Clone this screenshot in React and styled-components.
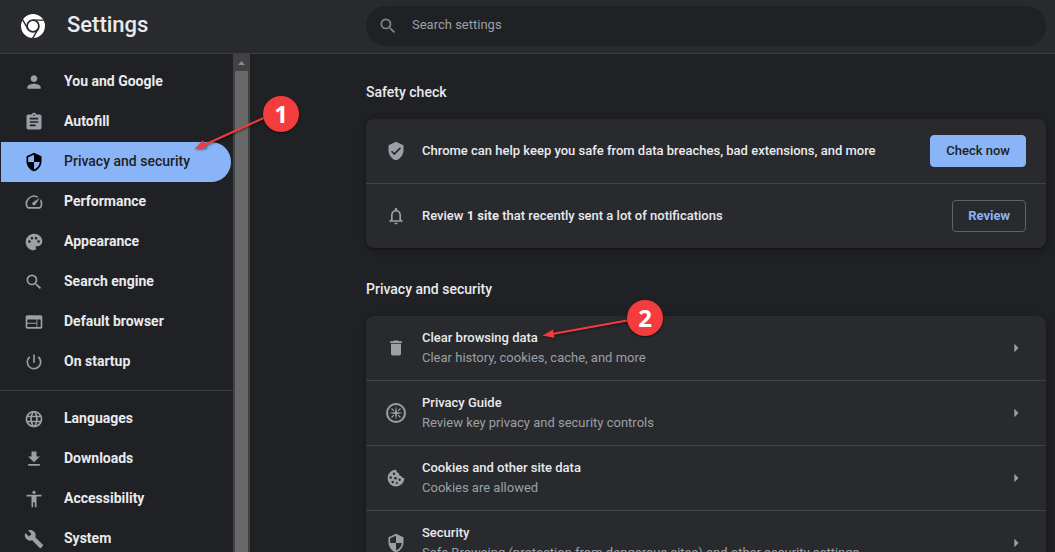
import React, { useState } from 'react';
import styled, { createGlobalStyle, css } from 'styled-components';
import {
  MdPerson,
  MdAssignment,
  MdSecurity,
  MdPalette,
  MdSearch,
  MdWeb,
  MdPowerSettingsNew,
  MdLanguage,
  MdFileDownload,
  MdAccessibility,
  MdBuild,
  MdVerifiedUser,
  MdNotificationsNone,
  MdDelete,
  MdArrowRight,
  MdSpeed,
} from 'react-icons/md';

const GlobalStyle = createGlobalStyle`
  * {
    box-sizing: border-box;
  }
  body {
    margin: 0;
    background: #202124;
    color: #e8eaed;
    font-family: Roboto, 'Liberation Sans', sans-serif;
    font-size: 13px;
    line-height: 20px;
  }
`;

const Page = styled.div`
  position: relative;
  display: flex;
  flex-direction: column;
  height: 100vh;
  overflow: hidden;
`;

const Toolbar = styled.header`
  display: flex;
  align-items: center;
  flex-shrink: 0;
  height: 54px;
  padding: 0 9px 2px 21px;
  background: #292a2d;
  border-bottom: 1px solid #3f4042;
`;

const Brand = styled.div`
  display: flex;
  align-items: center;
  flex: 0 0 345px;
  gap: 22px;
  h1 {
    margin: 0;
    padding-bottom: 2px;
    font-size: 22px;
    font-weight: 500;
    line-height: 28px;
  }
`;

const SearchBox = styled.label`
  display: flex;
  align-items: center;
  flex: 1;
  height: 40px;
  gap: 14px;
  padding: 0 12px;
  border-radius: 20px;
  background: #202124;
  color: #80868b;
  input {
    flex: 1;
    min-width: 0;
    padding: 0 0 2px;
    border: none;
    outline: none;
    background: transparent;
    color: #e8eaed;
    font: inherit;
  }
  input::placeholder {
    color: #9aa0a6;
    opacity: 1;
  }
`;

const Body = styled.div`
  display: flex;
  flex: 1;
  min-height: 0;
`;

const Sidebar = styled.nav`
  flex: 0 0 233px;
  overflow: hidden;
  padding-top: 8px;
`;

const selectedItem = css`
  background: #8ab4f8;
  color: #202124;
  font-weight: 500;
  svg {
    color: #000;
  }
`;

const MenuItem = styled.a`
  display: flex;
  align-items: center;
  height: 40px;
  gap: 20px;
  margin: 0 2px 0 1px;
  padding-left: 23px;
  border-radius: 0 20px 20px 0;
  color: #e8eaed;
  font-size: 14px;
  font-weight: 700;
  text-decoration: none;
  svg {
    flex-shrink: 0;
    color: #9aa0a6;
  }
  span {
    padding-bottom: 2px;
  }
  ${({ $selected }) => $selected && selectedItem}
`;

const Divider = styled.hr`
  height: 1px;
  margin: 8px 0;
  border: none;
  background: #3c3d40;
`;

const ScrollTrack = styled.div`
  display: flex;
  flex-direction: column;
  align-items: center;
  flex: 0 0 17px;
  background: #424242;
`;

const ScrollArrow = styled.div`
  display: flex;
  align-items: center;
  justify-content: center;
  height: 17px;
`;

const ScrollThumb = styled.div`
  flex: 1;
  width: 13px;
  background: #686868;
`;

const Main = styled.main`
  flex: 1;
  min-width: 0;
  overflow: hidden;
  padding: 0 9px 0 116px;
`;

const Section = styled.section`
  padding-top: 28px;
  & + & {
    padding-top: 31px;
  }
  h2 {
    margin: 0 0 17px;
    font-size: 14px;
    font-weight: 500;
    line-height: 20px;
  }
`;

const Card = styled.div`
  border-radius: 8px;
  background: #292a2d;
  box-shadow: 0 1px 2px rgba(0, 0, 0, 0.3), 0 2px 6px 2px rgba(0, 0, 0, 0.15);
`;

const Row = styled.div`
  display: flex;
  align-items: center;
  height: 64px;
  padding: 0 20px;
  & + & {
    height: 65px;
    border-top: 1px solid #414245;
  }
  > svg {
    flex-shrink: 0;
    color: #9aa0a6;
  }
`;

const RowText = styled.div`
  flex: 1;
  min-width: 0;
  padding: 0 16px;
  font-weight: 500;
  white-space: nowrap;
`;

const SubLabel = styled.div`
  color: #9aa0a6;
  font-weight: 400;
`;

const ActionButton = styled.button`
  height: 32px;
  padding: 0 15px 1px;
  border: 1px solid ${({ $primary }) => ($primary ? '#8ab4f8' : '#5f6368')};
  border-radius: 4px;
  background: ${({ $primary }) => ($primary ? '#8ab4f8' : 'transparent')};
  color: ${({ $primary }) => ($primary ? '#202124' : '#8ab4f8')};
  font-family: inherit;
  font-size: 13px;
  font-weight: ${({ $primary }) => ($primary ? 500 : 700)};
  cursor: pointer;
`;

const LinkButton = styled.button`
  display: flex;
  align-items: center;
  justify-content: center;
  width: 20px;
  height: 32px;
  padding: 0;
  border: none;
  background: transparent;
  color: #9aa0a6;
  cursor: pointer;
`;

const Annotations = styled.div`
  position: absolute;
  inset: 0;
  overflow: hidden;
  pointer-events: none;
  svg {
    position: absolute;
    top: 0;
    left: 0;
    filter: drop-shadow(1px 1px 1px rgba(0, 0, 0, 0.5));
  }
`;

const StepBadge = styled.span`
  position: absolute;
  left: ${({ $x }) => $x}px;
  top: ${({ $y }) => $y}px;
  width: 36px;
  height: 36px;
  border-radius: 50%;
  background: #f43b3d;
  box-shadow: 0 1px 2px rgba(0, 0, 0, 0.6);
  color: #fff;
  font-family: 'Open Sans', 'Liberation Sans', sans-serif;
  font-size: 24px;
  font-weight: 700;
  line-height: 36px;
  text-align: center;
`;

const ChromeLogo = () => (
  <svg width="24" height="24" viewBox="0 0 24 24">
    <circle cx="12" cy="12" r="12" fill="#fff" />
    <g fill="none" stroke="#292a2d" strokeWidth="1.4">
      <circle cx="12" cy="12" r="5.9" strokeWidth="1.8" />
      <path d="M12 6.1h11M6.900 14.950L1.400 5.400M17.100 14.950l-5.500 9.500" />
    </g>
  </svg>
);

const CompassIcon = () => (
  <svg width="20" height="20" viewBox="0 0 20 20">
    <circle cx="10" cy="10" r="9" fill="none" stroke="currentColor" strokeWidth="2" />
    <path
      fill="currentColor"
      d="M10 3l1 6 6 1-6 1-1 6-1-6-6-1 6-1z"
    />
    <path
      stroke="currentColor"
      strokeWidth="1.2"
      d="M5.500 5.500l2.400 2.400M14.500 5.500l-2.400 2.400M5.500 14.500l2.400-2.400M14.500 14.500l-2.400-2.400"
    />
  </svg>
);

const CookieIcon = () => (
  <svg width="20" height="20" viewBox="0 0 20 20">
    <path
      fill="currentColor"
      d="M10.300 1.700A8.400 8.400 0 1 0 18.400 10c-1.500.3-2.700-.6-2.800-2.100-1.700.2-2.900-1-2.600-2.700-1.700-.2-2.900-1.700-2.700-3.500z"
    />
    <g fill="#292a2d">
      <circle cx="8" cy="5.700" r="1.200" />
      <circle cx="4.700" cy="9.500" r="1.200" />
      <circle cx="9.500" cy="10.300" r="1.300" />
      <circle cx="6.700" cy="14" r="1.200" />
      <circle cx="13.600" cy="11.700" r="1.200" />
      <circle cx="10.800" cy="15" r="1.100" />
    </g>
  </svg>
);

const mainMenu = [
  { label: 'You and Google', icon: MdPerson },
  { label: 'Autofill', icon: MdAssignment },
  { label: 'Privacy and security', icon: MdSecurity },
  { label: 'Performance', icon: MdSpeed },
  { label: 'Appearance', icon: MdPalette },
  { label: 'Search engine', icon: MdSearch },
  { label: 'Default browser', icon: MdWeb },
  { label: 'On startup', icon: MdPowerSettingsNew },
];

const advancedMenu = [
  { label: 'Languages', icon: MdLanguage },
  { label: 'Downloads', icon: MdFileDownload },
  { label: 'Accessibility', icon: MdAccessibility },
  { label: 'System', icon: MdBuild },
];

const privacyRows = [
  {
    label: 'Clear browsing data',
    sub: 'Clear history, cookies, cache, and more',
    icon: MdDelete,
  },
  {
    label: 'Privacy Guide',
    sub: 'Review key privacy and security controls',
    icon: CompassIcon,
  },
  {
    label: 'Cookies and other site data',
    sub: 'Cookies are allowed',
    icon: CookieIcon,
  },
  {
    label: 'Security',
    sub: 'Safe Browsing (protection from dangerous sites) and other security settings',
    icon: MdSecurity,
  },
];

const Menu = ({ items, selected, onSelect }) =>
  items.map(({ label, icon: Icon }) => (
    <MenuItem
      key={label}
      href="#"
      $selected={label === selected}
      onClick={(e) => {
        e.preventDefault();
        onSelect(label);
      }}
    >
      <Icon size={20} />
      <span>{label}</span>
    </MenuItem>
  ));

const App = () => {
  const [selected, setSelected] = useState('Privacy and security');
  const [query, setQuery] = useState('');

  return (
    <Page>
      <GlobalStyle />
      <Toolbar>
        <Brand>
          <ChromeLogo />
          <h1>Settings</h1>
        </Brand>
        <SearchBox>
          <MdSearch size={20} />
          <input
            aria-label="Search settings"
            placeholder="Search settings"
            value={query}
            onChange={(e) => setQuery(e.target.value)}
          />
        </SearchBox>
      </Toolbar>
      <Body>
        <Sidebar>
          <Menu items={mainMenu} selected={selected} onSelect={setSelected} />
          <Divider />
          <Menu items={advancedMenu} selected={selected} onSelect={setSelected} />
        </Sidebar>
        <ScrollTrack>
          <ScrollArrow>
            <svg width="7" height="4" viewBox="0 0 7 4">
              <path fill="#8b8b8b" d="M0 4l3.5-4L7 4z" />
            </svg>
          </ScrollArrow>
          <ScrollThumb />
        </ScrollTrack>
        <Main>
          <Section>
            <h2>Safety check</h2>
            <Card>
              <Row>
                <MdVerifiedUser size={20} />
                <RowText>
                  Chrome can help keep you safe from data breaches, bad extensions, and more
                </RowText>
                <ActionButton $primary>Check now</ActionButton>
              </Row>
              <Row>
                <MdNotificationsNone size={20} />
                <RowText>
                  Review <b>1 site</b> that recently sent a lot of notifications
                </RowText>
                <ActionButton>Review</ActionButton>
              </Row>
            </Card>
          </Section>
          <Section>
            <h2>Privacy and security</h2>
            <Card>
              {privacyRows.map(({ label, sub, icon: Icon }) => (
                <Row key={label}>
                  <Icon size={20} />
                  <RowText>
                    {label}
                    <SubLabel>{sub}</SubLabel>
                  </RowText>
                  <LinkButton aria-label={label}>
                    <MdArrowRight size={20} />
                  </LinkButton>
                </Row>
              ))}
            </Card>
          </Section>
        </Main>
      </Body>
      <Annotations>
        <svg width="700" height="400" viewBox="0 0 700 400">
          <path stroke="#f43b3d" strokeWidth="2" d="M266 117L204 145M630 320l-78 14" />
          <path
            fill="#f43b3d"
            d="M194.500 149l8.500-9 3.500 8zM542.500 335.500l10.500-6 1.500 8.500z"
          />
        </svg>
        <StepBadge $x={263} $y={96}>1</StepBadge>
        <StepBadge $x={627} $y={300}>2</StepBadge>
      </Annotations>
    </Page>
  );
};

export default App;
